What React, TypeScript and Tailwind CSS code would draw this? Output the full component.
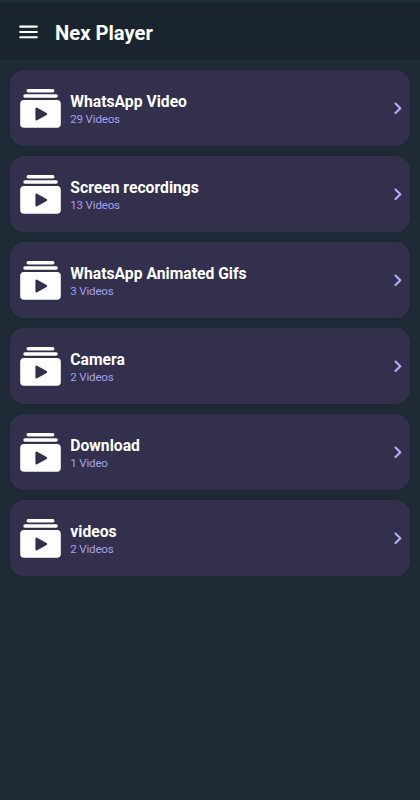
import React from "react";

type Folder = { name: string; count: string };

const folders: Folder[] = [
  { name: "WhatsApp Video", count: "29 Videos" },
  { name: "Screen recordings", count: "13 Videos" },
  { name: "WhatsApp Animated Gifs", count: "3 Videos" },
  { name: "Camera", count: "2 Videos" },
  { name: "Download", count: "1 Video" },
  { name: "videos", count: "2 Videos" },
];

function FolderIcon() {
  return (
    <svg className="h-10 w-[41px] shrink-0" viewBox="0 0 41 40" fill="#fff">
      <rect x="6.5" y="1.1" width="28" height="3.4" rx="1.7" />
      <rect x="3.3" y="6.3" width="34.5" height="3.5" rx="1.7" />
      <rect x="0.2" y="12" width="40.6" height="27.8" rx="3.8" />
      <path
        d="M16.6 20.8v10.4L26 26z"
        fill="#32304c"
        stroke="#32304c"
        strokeWidth="2.4"
        strokeLinejoin="round"
      />
    </svg>
  );
}

function FolderCard({ name, count }: Folder) {
  return (
    <li className="flex h-[76px] items-center rounded-[14px] bg-[#32304c] pl-2.5 pr-2 shadow-[0_0_2px_rgba(0,0,0,0.2)]">
      <FolderIcon />
      <div className="ml-[9.3px] flex-1 pt-[5px]">
        <h2 className="text-[15.7px] leading-[18px] font-bold text-white">{name}</h2>
        <p className="text-[11.5px] leading-[17px] tracking-[-0.16px] text-[#a5a1ee]">{count}</p>
      </div>
      <svg
        className="h-3 w-2"
        viewBox="0 0 8 12"
        fill="none"
        stroke="#b0b0fa"
        strokeWidth="2.1"
        strokeLinecap="round"
        strokeLinejoin="round"
      >
        <path d="M1.5 1.5 6.3 6.3 1.5 11.1" />
      </svg>
    </li>
  );
}

export default function App() {
  return (
    <div className="h-[800px] w-[420px] overflow-hidden bg-[#1e2a35] pt-[3px] font-['Roboto',sans-serif]">
      <header className="flex h-[57px] items-center bg-[#1a242f] pl-[19px]">
        <svg
          className="h-[14px] w-[19px]"
          viewBox="0 0 19 14"
          stroke="#fff"
          strokeWidth="2.1"
          strokeLinecap="round"
        >
          <path d="M1.2 1.6h16.6M1.2 7h16.6M1.2 12.3h16.6" />
        </svg>
        <h1 className="ml-[17px] pt-0.5 text-[20.2px] leading-6 font-bold text-white">Nex Player</h1>
      </header>
      <ul className="flex flex-col gap-2.5 px-2.5 pt-2.5">
        {folders.map((f) => (
          <FolderCard key={f.name} {...f} />
        ))}
      </ul>
    </div>
  );
}
